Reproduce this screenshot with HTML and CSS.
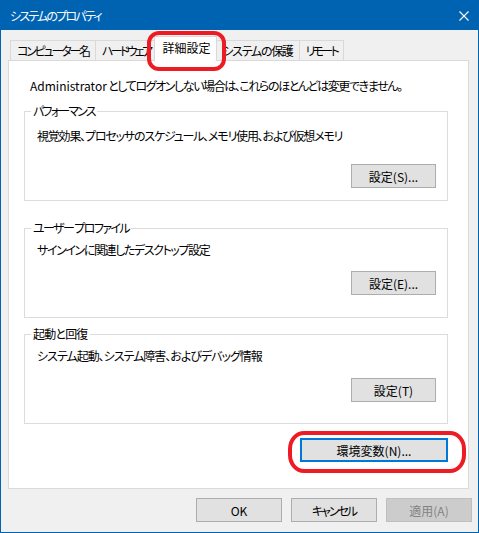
FILE: index.html
```html
<!DOCTYPE html>
<html lang="ja">
<head>
  <meta charset="UTF-8">
  <title>システムのプロパティ</title>
  <link rel="stylesheet" href="styles.css">
</head>
<body>
  <div class="window">
    <div class="titlebar">
      <span class="title">システムのプロパティ</span>
      <span class="close">
        <svg width="10" height="10" viewBox="0 0 10 10">
          <path d="M0.5 0.5 L9.5 9.5 M9.5 0.5 L0.5 9.5" stroke="#fff" stroke-width="1.1" fill="none"/>
        </svg>
      </span>
    </div>

    <div class="tabs">
      <div class="tab">コンピューター名</div>
      <div class="tab narrow">ハードウェア</div>
      <div class="tab active">詳細設定</div>
      <div class="tab kanji">システムの保護</div>
      <div class="tab narrow last">リモート</div>
    </div>

    <div class="panel">
      <p class="intro"><span class="latin">Administrator</span> としてログオンしない場合は、これらのほとんどは変更できません。</p>

      <div class="group perf">
        <span class="group-title">パフォーマンス</span>
        <p class="group-text">視覚効果、プロセッサのスケジュール、メモリ使用、および仮想メモリ</p>
        <button class="btn">設定(S)...</button>
      </div>

      <div class="group profile">
        <span class="group-title">ユーザー プロファイル</span>
        <p class="group-text">サインインに関連したデスクトップ設定</p>
        <button class="btn">設定(E)...</button>
      </div>

      <div class="group startup">
        <span class="group-title">起動と回復</span>
        <p class="group-text">システム起動、システム障害、およびデバッグ情報</p>
        <button class="btn">設定(T)</button>
      </div>

      <button class="btn env">環境変数(N)...</button>
    </div>

    <div class="footer">
      <button class="btn">OK</button>
      <button class="btn kana">キャンセル</button>
      <button class="btn" disabled>適用(A)</button>
    </div>

    <!-- red highlight marks -->
    <div class="mark mark-tab"></div>
    <div class="mark mark-env"></div>
  </div>
</body>
</html>
```

FILE: styles.css
```css
* {
  box-sizing: border-box;
}

body {
  margin: 0;
  font-family: "Noto Sans CJK JP", "Noto Sans", sans-serif;
  font-size: 12px;
  line-height: 16px;
  color: #000;
  font-feature-settings: "palt";
}

p {
  margin: 0;
}

.window {
  position: relative;
  width: 479px;
  height: 533px;
  border: 1px solid #0063b1;
  background-color: #f0f0f0;
}

.titlebar {
  height: 30px;
  margin: -1px -1px 0;
  padding: 1px 0 0 10px;
  background-color: #0063b1;
  color: #fff;
  display: flex;
  align-items: center;
  justify-content: space-between;
}

.title {
  letter-spacing: -1.8px;
}

.close {
  width: 31px;
  height: 29px;
  display: flex;
  align-items: center;
  justify-content: center;
}

.close svg {
  display: block;
}

/* Tabs */
.tabs {
  position: relative;
  z-index: 1;
  display: flex;
  align-items: flex-end;
  height: 25px;
  margin: 6px 0 -1px 9px;
}

.tab {
  height: 20px;
  margin-bottom: 1px;
  padding: 0 6px;
  border: 1px solid #d9d9d9;
  border-bottom: none;
  border-right: none;
  background-color: #f0f0f0;
  display: flex;
  align-items: center;
  white-space: nowrap;
  letter-spacing: -2.2px;
}

.tab.narrow {
  letter-spacing: -2.7px;
}

.tab.kanji {
  letter-spacing: -1.3px;
}

.tab.last {
  border-right: 1px solid #d9d9d9;
}

.tab.active {
  position: relative;
  height: 25px;
  margin: 0 -2px;
  padding: 0 6px 2px 7px;
  background-color: #fff;
  border-right: 1px solid #d9d9d9;
  letter-spacing: 0;
}

/* Panel */
.panel {
  width: 461px;
  height: 429px;
  margin-left: 7px;
  padding-top: 17px;
  background-color: #fff;
  border: 1px solid #d9d9d9;
  display: flex;
  flex-direction: column;
}

.intro {
  margin-left: 21px;
  letter-spacing: -1.4px;
  white-space: nowrap;
}

.intro .latin {
  letter-spacing: 0;
}

.group {
  position: relative;
  width: 424px;
  margin-left: 15px;
  border: 1px solid #dcdcdc;
  display: flex;
  flex-direction: column;
}

.group-title {
  position: absolute;
  top: -9px;
  left: 6px;
  padding: 0 2px;
  background-color: #fff;
  letter-spacing: -1.8px;
}

.group-text {
  margin-left: 12px;
  letter-spacing: -1.2px;
  white-space: nowrap;
}

.group .btn {
  align-self: flex-end;
  margin-right: 11px;
}

.perf {
  margin-top: 17px;
  height: 90px;
  padding-top: 16px;
}

.perf .btn {
  margin-top: 20px;
}

.profile {
  margin-top: 27px;
  height: 90px;
  padding-top: 13px;
}

.profile .group-text {
  letter-spacing: -1.4px;
}

.profile .group-title {
  letter-spacing: -1.6px;
}

.profile .btn {
  margin-top: 13px;
}

.startup {
  margin-top: 16px;
  height: 90px;
  padding-top: 13px;
}

.startup .group-title {
  letter-spacing: -0.8px;
}

.startup .group-text {
  letter-spacing: -1px;
}

.startup .btn {
  margin-top: 14px;
}

/* Buttons */
.btn {
  width: 85px;
  height: 24px;
  padding: 0;
  font-family: inherit;
  font-size: 12px;
  font-feature-settings: "palt";
  color: #000;
  background-color: #e1e1e1;
  border: 1px solid #adadad;
  border-radius: 0;
}

.btn.kana {
  letter-spacing: -2px;
}

.btn:disabled {
  background-color: #cccccc;
  border-color: #bfbfbf;
  color: #838383;
}

.env {
  align-self: flex-end;
  width: 148px;
  margin: 14px 20px 0 0;
  border: 2px solid #0078d7;
}

.footer {
  display: flex;
  justify-content: flex-end;
  gap: 9px;
  margin-top: 9px;
  padding-right: 6px;
}

.footer .btn {
  width: 86px;
}

/* Red hand-drawn highlights */
.mark {
  position: absolute;
  z-index: 2;
  border: 4px solid #ed1c24;
}

.mark-tab {
  left: 146px;
  top: 30px;
  width: 79px;
  height: 40px;
  border-radius: 12px;
}

.mark-env {
  left: 287px;
  top: 430px;
  width: 178px;
  height: 42px;
  border-radius: 16px / 18px;
}
```
